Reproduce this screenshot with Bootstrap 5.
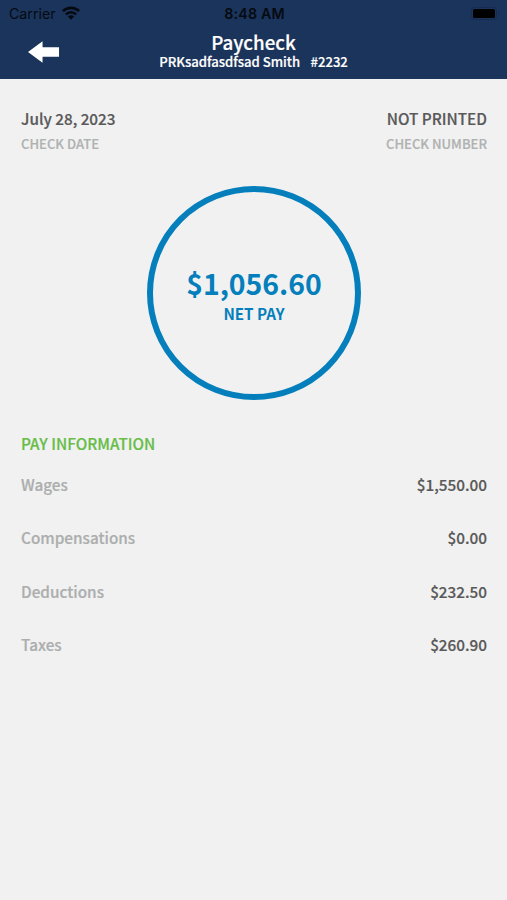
<!DOCTYPE html>
<html lang="en">
<head>
<meta charset="utf-8">
<meta name="viewport" content="width=device-width, initial-scale=1">
<title>Paycheck</title>
<link href="https://cdn.jsdelivr.net/npm/bootstrap@5.3.0/dist/css/bootstrap.min.css" rel="stylesheet">
<style>
  body { background: #f1f1f1; color: #595959; font-family: "Noto Sans CJK SC", "Noto Sans", sans-serif; font-weight: 500; font-size: 15.3px; -webkit-text-stroke: .2px currentColor; }
  .topbar { height: 79px; background: #1b345b; }
  .statusbar { height: 27px; padding: 0 7px 0 9px; color: #050a12; font: 400 14.2px/27px Inter, "Liberation Sans", sans-serif; -webkit-text-stroke: 0; }
  .statusbar > * { flex: 1 1 0; }
  .clock { font-weight: 600; letter-spacing: .2px; }
  .wifi { margin-left: 6px; margin-top: -1px; }
  .titlebar { height: 52px; }
  .titlebar > .side { width: 60px; padding-left: 28px; }
  .side svg { margin-top: -3px; }
  .titles { padding-top: 3px; }
  .screen-title { font-size: 18.8px; line-height: 23px; }
  .screen-sub { font-size: 13.1px; line-height: 18px; white-space: pre; }
  .emp-no { margin-left: 1.5px; }
  main { padding: 27px 20px 0 21px; }
  .value { line-height: 24px; }
  .caption { font-size: 13.05px; line-height: 28px; color: #b0b2b2; }
  .ring { width: 214px; height: 214px; margin: 28px auto 0; border: 6px solid #057fbc; color: #057fbc; padding-top: 74px; -webkit-text-stroke: 0; }
  .net-amount { font-size: 28.4px; line-height: 34px; font-weight: 700; }
  .net-label { font-size: 15.2px; line-height: 26px; font-weight: 700; }
  .section-title { font-size: 15.3px; line-height: 24px; margin-top: 31px; color: #68bd49; }
  .pay-rows { padding-top: 3px; }
  .pay-row { line-height: 53.4px; }
  .pay-row > :first-child { color: #acaeae; }
</style>
</head>
<body>
<header class="topbar text-white">
  <div class="statusbar d-flex align-items-center">
    <div class="d-flex align-items-center"><span class="carrier">Carrier</span>
      <svg class="wifi" width="18" height="14" viewBox="0 0 18 14" fill="none" stroke="#050a12" stroke-width="2.6"><path d="M.9 5.2a11.5 11.5 0 0 1 16.2 0M3.9 8.4a7.2 7.2 0 0 1 10.2 0"/><path fill="#050a12" stroke="none" d="M9 13.7 5.9 10.5a4.4 4.4 0 0 1 6.2 0z"/></svg>
    </div>
    <div class="text-center"><span class="clock">8:48 AM</span></div>
    <div class="d-flex justify-content-end">
      <svg width="29" height="13" viewBox="0 0 29 13"><rect x=".5" y=".5" width="25" height="12" rx="3" fill="none" stroke="#162b50"/><rect x="2" y="2" width="22" height="9" rx="1.5" fill="#000"/><path d="M27 4.5v4a2.2 2.2 0 0 0 0-4z" fill="#162b50"/></svg>
    </div>
  </div>
  <div class="titlebar d-flex">
    <div class="side d-flex align-items-center">
      <svg width="33" height="22" viewBox="0 0 33 22"><path d="M0 11 15 0v6h17v10H15v6z" fill="#fff"/></svg>
    </div>
    <div class="titles flex-grow-1 text-center">
      <div class="screen-title">Paycheck</div>
      <div class="screen-sub">PRKsadfasdfsad Smith   <span class="emp-no">#2232</span></div>
    </div>
    <div class="side"></div>
  </div>
</header>
<main>
  <div class="d-flex justify-content-between">
    <div><div class="value">July 28, 2023</div><div class="caption">CHECK DATE</div></div>
    <div class="text-end"><div class="value">NOT PRINTED</div><div class="caption">CHECK NUMBER</div></div>
  </div>
  <section class="ring rounded-circle text-center">
    <div class="net-amount">$1,056.60</div>
    <div class="net-label">NET PAY</div>
  </section>
  <h2 class="section-title mb-0">PAY INFORMATION</h2>
  <div class="pay-rows">
    <div class="pay-row d-flex justify-content-between"><span>Wages</span><span>$1,550.00</span></div>
    <div class="pay-row d-flex justify-content-between"><span>Compensations</span><span>$0.00</span></div>
    <div class="pay-row d-flex justify-content-between"><span>Deductions</span><span>$232.50</span></div>
    <div class="pay-row d-flex justify-content-between"><span>Taxes</span><span>$260.90</span></div>
  </div>
</main>
<script src="https://cdn.jsdelivr.net/npm/bootstrap@5.3.0/dist/js/bootstrap.bundle.min.js"></script>
</body>
</html>
